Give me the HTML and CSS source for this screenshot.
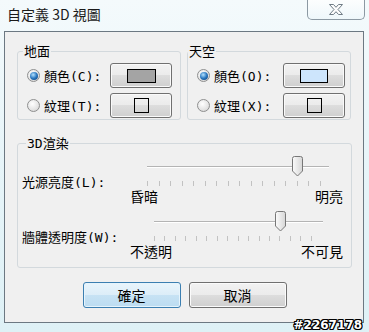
FILE: index.html
```html
<!DOCTYPE html>
<html lang="zh-Hant">
<head>
    <meta charset="UTF-8">
    <title>自定義 3D 視圖</title>
    <link rel="stylesheet" href="styles.css">
</head>
<body>

    <!-- Title bar -->
    <div class="titlebar">
        <div class="title">自定義 3D 視圖</div>
        <div class="close-btn">
            <svg width="18" height="13" viewBox="0 0 18 13">
                <path d="M2.5 1.5 H6.5 L9 4.3 L11.5 1.5 H15.5 L11 6.5 L15.5 11.5 H11.5 L9 8.7 L6.5 11.5 H2.5 L7 6.5 Z" fill="#fdfdfd" stroke="#6f7c86" stroke-width="1" stroke-linejoin="round"/>
            </svg>
        </div>
    </div>

    <!-- Dialog body -->
    <div class="client">
        <div class="top-row">
            <fieldset class="group">
                <legend>地面</legend>
                <div class="option">
                    <span class="radio checked"></span>
                    <span class="option-label">顏色(C):</span>
                    <button class="pick-btn"><span class="swatch swatch-gray"></span></button>
                </div>
                <div class="option">
                    <span class="radio"></span>
                    <span class="option-label">紋理(T):</span>
                    <button class="pick-btn"><span class="swatch swatch-texture"></span></button>
                </div>
            </fieldset>

            <fieldset class="group group-sky">
                <legend>天空</legend>
                <div class="option">
                    <span class="radio checked"></span>
                    <span class="option-label">顏色(O):</span>
                    <button class="pick-btn"><span class="swatch swatch-sky"></span></button>
                </div>
                <div class="option">
                    <span class="radio"></span>
                    <span class="option-label">紋理(X):</span>
                    <button class="pick-btn"><span class="swatch swatch-texture"></span></button>
                </div>
            </fieldset>
        </div>

        <fieldset class="group render">
            <legend>3D渲染</legend>

            <div class="slider slider-light" data-value="13" data-max="15">
                <div class="track"></div>
                <div class="rail"></div>
                <div class="slider-name">光源亮度(L):</div>
                <div class="ticks"></div>
                <div class="ends"><span>昏暗</span><span>明亮</span></div>
            </div>

            <div class="slider slider-wall" data-value="12" data-max="15">
                <div class="track"></div>
                <div class="rail"></div>
                <div class="slider-name">牆體透明度(W):</div>
                <div class="ticks"></div>
                <div class="ends"><span>不透明</span><span>不可見</span></div>
            </div>
        </fieldset>

        <div class="actions">
            <button class="dlg-btn default">確定</button>
            <button class="dlg-btn">取消</button>
        </div>
    </div>

    <div class="watermark">#2267178</div>

<script>
    // build tick marks and place thumbs
    document.querySelectorAll('.slider').forEach(function(slider) {
        const max = parseInt(slider.dataset.max);
        const value = parseInt(slider.dataset.value);
        const ticks = slider.querySelector('.ticks');

        for (let i = 0; i <= max; i++) {
            ticks.appendChild(document.createElement('span'));
        }

        const rail = slider.querySelector('.rail');
        const pct = (value / max * 100).toFixed(2);
        rail.innerHTML = `
            <svg class="thumb" style="left: calc(${pct}% - 6.5px)" width="13" height="21" viewBox="0 0 13 21">
                <defs>
                    <linearGradient id="tg${max}${value}" x1="0" y1="0" x2="1" y2="0">
                        <stop offset="0" stop-color="#fbfbfb"/>
                        <stop offset="1" stop-color="#d6d6d6"/>
                    </linearGradient>
                </defs>
                <path d="M1.5 2.5 Q1.5 0.5 3.5 0.5 H9.5 Q11.5 0.5 11.5 2.5 V15 L6.5 20 L1.5 15 Z" fill="url(#tg${max}${value})" stroke="#777" stroke-width="1"/>
            </svg>`;
    });
</script>

</body>
</html>
```

FILE: styles.css
```css
/* Global */
* {
    margin: 0;
    padding: 0;
    box-sizing: border-box;
}

body {
    width: 369px;
    height: 332px;
    overflow: hidden;
    position: relative;
    background: linear-gradient(180deg, #f4fafc 0%, #e8f5f9 45%, #def1f6 100%);
    font-family: "DejaVu Sans Mono", "Noto Sans CJK TC", monospace;
    font-size: 13px;
    color: #000;
}

/* Title bar */
.titlebar {
    height: 31px;
    display: flex;
    justify-content: space-between;
    align-items: flex-start;
}

.title {
    font-family: "Noto Sans CJK TC", sans-serif;
    font-size: 14px;
    line-height: 20px;
    margin: 4px 0 0 7px;
    color: #1a1a1a;
}

.close-btn {
    width: 58px;
    height: 20px;
    margin-right: 4px;
    border: 1px solid #8c99a3;
    border-top: none;
    border-radius: 0 0 5px 5px;
    background: linear-gradient(rgba(255, 255, 255, 0.75), rgba(236, 246, 250, 0.6));
    display: flex;
    align-items: center;
    justify-content: center;
}

/* Client area */
.client {
    margin-left: 4px;
    width: 360px;
    height: 292px;
    border: 1px solid #6c7882;
    background: #f0f0f0;
    padding: 11px 11px 0 12px;
}

.top-row {
    display: flex;
    gap: 6px;
}

/* Group boxes */
.group {
    min-inline-size: 0;
    width: 164px;
    border: 1px solid #d3d9dd;
    border-radius: 3px;
    padding: 3px 0 1px 0;
}

.group legend {
    margin-left: 5px;
    padding: 0 1px;
    line-height: 17px;
    font-family: "DejaVu Sans Mono", "Noto Sans CJK TC", monospace;
}

.group-sky legend {
    margin-left: 0;
}

.option {
    display: flex;
    align-items: center;
    height: 25px;
    padding: 0 8px 0 9px;
}

.option + .option {
    margin-top: 5px;
}

.group-sky .option {
    padding-right: 5px;
}

.radio {
    width: 13px;
    height: 13px;
    border-radius: 50%;
    border: 1px solid #8e8f8f;
    background: radial-gradient(circle at 40% 35%, #ffffff, #e4e4e4 60%, #cdcdcd);
    margin-right: 4px;
    display: flex;
    align-items: center;
    justify-content: center;
}

.radio.checked::after {
    content: "";
    width: 8px;
    height: 8px;
    border-radius: 50%;
    background: radial-gradient(circle at 40% 35%, #b4e2ff, #2a78c0 50%, #0c3a70);
}

.option-label {
    flex: 1;
}

.pick-btn {
    width: 62px;
    height: 25px;
    border: 1px solid #707070;
    border-radius: 3px;
    background: linear-gradient(#f2f2f2 0%, #ebebeb 50%, #dddddd 50%, #cfcfcf 100%);
    box-shadow: inset 0 0 0 1px #fafafa;
    display: flex;
    align-items: center;
    justify-content: center;
}

.swatch {
    display: block;
    border: 1px solid #000;
}

.swatch-gray {
    width: 29px;
    height: 14px;
    background: #a4a4a4;
}

.swatch-sky {
    width: 28px;
    height: 14px;
    background: #cde5fc;
}

.swatch-texture {
    width: 15px;
    height: 15px;
    background: transparent;
}

/* 3D render section */
.render {
    width: 335px;
    margin-top: 15px;
    padding: 4px 0 8px 4px;
}

.render legend {
    margin-left: 4px;
}

.slider {
    display: grid;
    grid-template-columns: 108px 213px;
    grid-template-rows: 21px 12px 15px;
}

.slider + .slider {
    margin-top: 7px;
}

.slider-light {
    --tick-start: 17px;
    --tick-end: 22px;
    --track-start: 17px;
    --track-end: 14px;
}

.slider-wall {
    --tick-start: 24px;
    --tick-end: 31px;
    --track-start: 24px;
    --track-end: 20px;
}

.track {
    grid-column: 2;
    grid-row: 1;
    align-self: center;
    height: 2px;
    border-top: 1px solid #b4b4b4;
    border-bottom: 1px solid #ffffff;
    margin: 0 var(--track-end) 0 var(--track-start);
}

.rail {
    grid-column: 2;
    grid-row: 1;
    position: relative;
    margin: 0 var(--tick-end) 0 var(--tick-start);
}

.thumb {
    position: absolute;
    top: 0;
    display: block;
}

.slider-name {
    grid-column: 1;
    grid-row: 2;
    line-height: 12px;
    white-space: nowrap;
}

.ticks {
    grid-column: 2;
    grid-row: 2;
    display: flex;
    justify-content: space-between;
    align-items: flex-start;
    padding-top: 4px;
    margin: 0 var(--tick-end) 0 var(--tick-start);
}

.ticks span {
    width: 1px;
    height: 5px;
    background: #c2c2c2;
}

.ends {
    grid-column: 2;
    grid-row: 3;
    display: flex;
    justify-content: space-between;
    font-family: "Noto Sans CJK TC", sans-serif;
    font-size: 14px;
    line-height: 15px;
}

/* Dialog buttons */
.actions {
    display: flex;
    justify-content: center;
    gap: 8px;
    margin-top: 14px;
}

.dlg-btn {
    width: 98px;
    height: 26px;
    border: 1px solid #707070;
    border-radius: 3px;
    background: linear-gradient(#f2f2f2 0%, #ebebeb 50%, #dddddd 50%, #cfcfcf 100%);
    box-shadow: inset 0 0 0 1px #fbfbfb;
    font-family: "Noto Sans CJK TC", sans-serif;
    font-size: 14px;
    color: #000;
}

.dlg-btn.default {
    border-color: #3c7fb1;
    background: linear-gradient(#e9f5fc 0%, #dcedf8 50%, #c7e2f4 50%, #bcdcf1 100%);
    box-shadow: inset 0 0 0 1px #e6f4fc;
}

/* Watermark */
.watermark {
    position: absolute;
    right: 7px;
    bottom: 0;
    font-family: "DejaVu Sans", sans-serif;
    font-weight: bold;
    font-size: 12px;
    line-height: 14px;
    color: #fff;
    text-shadow: 1px 0 0 #000, -1px 0 0 #000, 0 1px 0 #000, 0 -1px 0 #000,
                 1px 1px 0 #000, -1px -1px 0 #000, 1px -1px 0 #000, -1px 1px 0 #000;
}
```
